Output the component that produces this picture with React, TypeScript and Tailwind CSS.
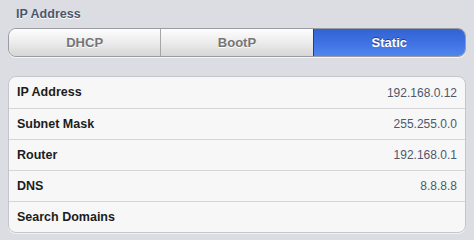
const rows = [
  { label: "IP Address", value: "192.168.0.12" },
  { label: "Subnet Mask", value: "255.255.0.0" },
  { label: "Router", value: "192.168.0.1" },
  { label: "DNS", value: "8.8.8.8" },
  { label: "Search Domains", value: "" },
];

export default function App() {
  return (
    <div
      className="w-[474px] h-[240px] bg-[#dbdde3] px-2 pt-[6px] overflow-hidden"
      style={{ fontFamily: '"Liberation Sans", Arial, sans-serif' }}
    >
      <div className="pl-2 text-[12.5px] font-bold leading-[16px] text-[#4c566a] [text-shadow:0_1px_0_#fff]">
        IP Address
      </div>

      {/* segmented control */}
      <div className="mt-[6px] flex h-[29px] rounded-[8px] border border-[#9a9ca2] overflow-hidden shadow-[0_1px_0_#f4f5f7]">
        <div className="flex-1 flex items-center justify-center bg-gradient-to-b from-[#fdfdfd] via-[#ececec] to-[#d6d6d6] text-[13px] font-bold text-[#767676] [text-shadow:0_1px_0_#fff]">
          DHCP
        </div>
        <div className="w-px bg-[#a5a6aa]" />
        <div className="flex-1 flex items-center justify-center bg-gradient-to-b from-[#fdfdfd] via-[#ececec] to-[#d6d6d6] text-[13px] font-bold text-[#767676] [text-shadow:0_1px_0_#fff]">
          BootP
        </div>
        <div className="w-px bg-[#1f3f86]" />
        <div className="flex-1 flex items-center justify-center bg-gradient-to-b from-[#3263d2] via-[#3f71e2] to-[#5086ee] text-[13px] font-bold text-white [text-shadow:0_-1px_0_#1d3f8a]">
          Static
        </div>
      </div>

      {/* table */}
      <div className="mt-[19px] rounded-[8px] border border-[#c4c6cb] bg-[#f7f7f7] shadow-[0_1px_0_#eef0f3]">
        {rows.map((r, i) => (
          <div
            key={r.label}
            className={`flex h-[31px] items-center justify-between px-2 ${i > 0 ? "border-t border-[#d6d6d8]" : ""}`}
          >
            <span className="text-[12.5px] font-bold text-[#1c1c1c]">{r.label}</span>
            <span className="text-[12px] text-[#4e576c]">{r.value}</span>
          </div>
        ))}
      </div>
    </div>
  );
}
